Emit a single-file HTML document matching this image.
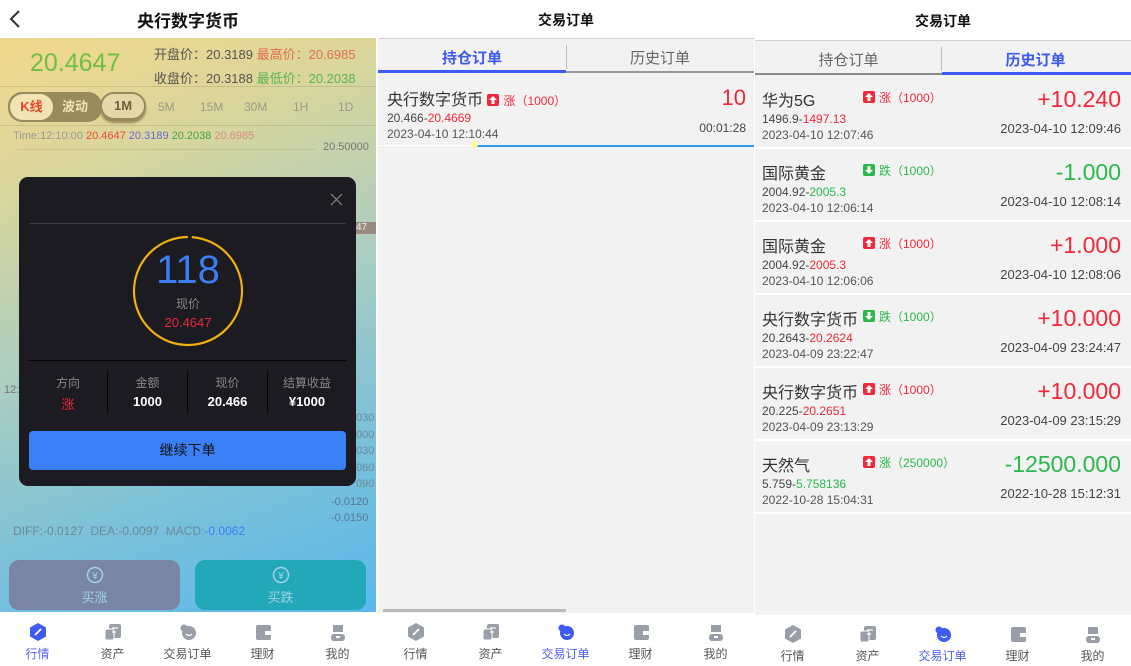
<!DOCTYPE html>
<html><head><meta charset="utf-8">
<style>
*{margin:0;padding:0;box-sizing:border-box}
body{width:1131px;height:666px;position:relative;overflow:hidden;background:#fff;font-family:"Liberation Sans","Noto Sans CJK SC",sans-serif}
.a{position:absolute;white-space:nowrap}
.panel{position:absolute;top:0;width:376px;height:666px;overflow:hidden}
.nav{position:absolute;left:0;width:376px;height:54px;background:#fff}
.ni{position:absolute;width:75px;text-align:center;font-size:12px;color:#555}
.ni svg{display:block;margin:0 auto 3px}
.tag{display:inline-block;width:12px;height:12px;border-radius:2px;vertical-align:-1px;margin-right:4px;position:relative}
</style></head><body>

<!-- LEFT PANEL -->
<div class="panel" style="left:0">
 <div class="a" style="left:0;top:0;width:376px;height:38px;background:#fff"></div>
 <svg class="a" style="left:8px;top:9px" width="14" height="20"><path d="M11 2 L3 10 L11 18" stroke="#333" stroke-width="2" fill="none"/></svg>
 <div class="a" style="left:0;top:7px;width:376px;text-align:center;font-size:17px;font-weight:bold;color:#111">央行数字货币</div>
 <div class="a" style="left:0;top:38px;width:376px;height:574px;background:linear-gradient(160deg,#f3d88c 0%,#d9d69c 22%,#a9cdc2 50%,#7fc2d6 72%,#5ab8ee 100%)"></div>
 <div class="a" style="left:30px;top:49px;font-size:25px;color:#6fbe45">20.4647</div>
 <div class="a" style="left:154px;top:44px;font-size:13px;color:#555">开盘价：20.3189 <span style="color:#e0704a">最高价：20.6985</span></div>
 <div class="a" style="left:154px;top:68px;font-size:13px;color:#555">收盘价：20.3188 <span style="color:#5ab550">最低价：20.2038</span></div>
 <div class="a" style="left:0;top:86px;width:376px;height:1px;background:rgba(0,0,0,.1)"></div>
 <div class="a" style="left:8px;top:92px;width:94px;height:30px;border-radius:14px;background:#978a5c"></div>
 <div class="a" style="left:10px;top:94px;width:43px;height:26px;border-radius:13px;background:#f1e3b3;color:#e8452a;font-size:13px;font-weight:bold;text-align:center;line-height:26px">K线</div>
 <div class="a" style="left:62px;top:94px;font-size:13px;font-weight:bold;color:#f1e3b3;line-height:26px">波动</div>
 <div class="a" style="left:100px;top:92px;width:46px;height:28px;border-radius:14px;background:#e4d8a8;border:2px solid #978a5c;color:#6b6040;font-size:13px;font-weight:bold;text-align:center;line-height:24px;box-shadow:0 3px 2px #978a5c">1M</div>
 <div class="a" style="left:158px;top:100px;font-size:12px;color:#9a9a88">5M</div>
 <div class="a" style="left:200px;top:100px;font-size:12px;color:#9a9a88">15M</div>
 <div class="a" style="left:244px;top:100px;font-size:12px;color:#9a9a88">30M</div>
 <div class="a" style="left:293px;top:100px;font-size:12px;color:#9a9a88">1H</div>
 <div class="a" style="left:338px;top:100px;font-size:12px;color:#9a9a88">1D</div>
 <div class="a" style="left:0;top:125px;width:376px;height:1px;background:rgba(0,0,0,.1)"></div>
 <div class="a" style="left:13px;top:130px;font-size:11px;color:#999">Time:12:10:00 <span style="color:#e84a3a">20.4647</span> <span style="color:#6a6ad0">20.3189</span> <span style="color:#4aa040">20.2038</span> <span style="color:#d88a80">20.6985</span></div>
 <div class="a" style="left:15px;top:149px;width:300px;height:1px;background:rgba(0,0,0,.08)"></div>
 <div class="a" style="left:323px;top:141px;font-size:11px;color:#777">20.50000</div>
 <div class="a" style="left:356px;top:222px;width:20px;height:12px;background:#9a8a80;color:#eee;font-size:10px">47</div>
 <div class="a" style="left:4px;top:384px;font-size:11px;color:#777">12:</div>
 <div class="a" style="left:356px;top:410px;font-size:11px;color:#6a8a9a;line-height:16.5px">030<br>000<br>030<br>060<br>090</div>
 <div class="a" style="left:331px;top:494px;font-size:11px;color:#557;line-height:16px;opacity:.7">-0.0120<br>-0.0150</div>
 <div class="a" style="left:13px;top:524px;font-size:12px;color:#6a8a98">DIFF:-0.0127 &nbsp;DEA:-0.0097 &nbsp;MACD:<span style="color:#3a7ef0">-0.0062</span></div>
 <div class="a" style="left:9px;top:560px;width:171px;height:50px;border-radius:10px;background:#7a85a6"></div>
 <div class="a" style="left:195px;top:560px;width:171px;height:50px;border-radius:10px;background:#22a8b8"></div>
 <svg class="a" style="left:86px;top:566px" width="18" height="18"><circle cx="9" cy="9" r="7.5" stroke="#9fd2e6" stroke-width="1.5" fill="none"/><text x="9" y="13" font-size="10" text-anchor="middle" fill="#9fd2e6">¥</text></svg>
 <svg class="a" style="left:272px;top:566px" width="18" height="18"><circle cx="9" cy="9" r="7.5" stroke="#9fd2e6" stroke-width="1.5" fill="none"/><text x="9" y="13" font-size="10" text-anchor="middle" fill="#9fd2e6">¥</text></svg>
 <div class="a" style="left:9px;top:587px;width:171px;text-align:center;font-size:13px;color:#9fd2e6">买涨</div>
 <div class="a" style="left:195px;top:587px;width:171px;text-align:center;font-size:13px;color:#9fd2e6">买跌</div>
 <!-- modal -->
 <div class="a" style="left:19px;top:177px;width:337px;height:309px;background:#1c1b21;border-radius:9px"></div>
 <svg class="a" style="left:330px;top:193px" width="13" height="13"><path d="M1 1L12 12M12 1L1 12" stroke="#888" stroke-width="1.2"/></svg>
 <div class="a" style="left:29px;top:223px;width:317px;height:1px;background:#3a3a40"></div>
 <svg class="a" style="left:132px;top:235px" width="112" height="112"><circle cx="56" cy="56" r="54" stroke="#f0b010" stroke-width="2.2" fill="none" stroke-dasharray="335 4" transform="rotate(-86 56 56)"/></svg>
 <div class="a" style="left:132px;top:248px;width:112px;text-align:center;font-size:40px;color:#3a7ef0">118</div>
 <div class="a" style="left:132px;top:295px;width:112px;text-align:center;font-size:12px;color:#888">现价</div>
 <div class="a" style="left:132px;top:315px;width:112px;text-align:center;font-size:13px;color:#e8283a">20.4647</div>
 <div class="a" style="left:29px;top:360px;width:317px;height:1px;background:#050505"></div>
 <div class="a" style="left:107px;top:372px;width:1px;height:40px;background:#050505"></div>
 <div class="a" style="left:187px;top:372px;width:1px;height:40px;background:#050505"></div>
 <div class="a" style="left:267px;top:372px;width:1px;height:40px;background:#050505"></div>
 <div class="a" style="left:29px;top:374px;width:78px;text-align:center;font-size:12px;color:#888">方向</div>
 <div class="a" style="left:108px;top:374px;width:79px;text-align:center;font-size:12px;color:#888">金额</div>
 <div class="a" style="left:188px;top:374px;width:79px;text-align:center;font-size:12px;color:#888">现价</div>
 <div class="a" style="left:268px;top:374px;width:78px;text-align:center;font-size:12px;color:#888">结算收益</div>
 <div class="a" style="left:29px;top:394px;width:78px;text-align:center;font-size:13px;color:#e8283a">涨</div>
 <div class="a" style="left:108px;top:394px;width:79px;text-align:center;font-size:13px;font-weight:bold;color:#fff">1000</div>
 <div class="a" style="left:188px;top:394px;width:79px;text-align:center;font-size:13px;font-weight:bold;color:#fff">20.466</div>
 <div class="a" style="left:268px;top:394px;width:78px;text-align:center;font-size:13px;font-weight:bold;color:#fff">¥1000</div>
 <div class="a" style="left:29px;top:431px;width:317px;height:39px;border-radius:4px;background:#3b7ff7;text-align:center;line-height:39px;font-size:14px;color:#111">继续下单</div>
 <!-- nav -->
 <div class="nav" style="top:612px">
  <div class="ni" style="left:0;top:10px;color:#5a5ef0"><svg width="20" height="20"><path d="M10 1L18 5.5V14.5L10 19L2 14.5V5.5Z" fill="#3e5af0"/><path d="M7 13L13 7" stroke="#fff" stroke-width="1.8"/></svg>行情</div>
  <div class="ni" style="left:75px;top:10px"><svg width="20" height="20"><rect x="6" y="2" width="12" height="14" rx="2" fill="#9a9ea8"/><rect x="2" y="7" width="9" height="11" rx="2" fill="#9a9ea8" stroke="#fff"/><path d="M9 6H15M9 10H13" stroke="#fff" stroke-width="1.3"/></svg>资产</div>
  <div class="ni" style="left:150px;top:10px"><svg width="20" height="20"><circle cx="11" cy="11" r="7" fill="#9a9ea8"/><circle cx="6" cy="6" r="3.5" fill="#9a9ea8"/><path d="M8 12Q11 15 14 12" stroke="#fff" stroke-width="1.2" fill="none"/></svg>交易订单</div>
  <div class="ni" style="left:225px;top:10px"><svg width="20" height="20"><rect x="3" y="3" width="15" height="15" rx="2" fill="#9a9ea8"/><rect x="12" y="9" width="6" height="4" fill="#fff"/></svg>理财</div>
  <div class="ni" style="left:300px;top:10px"><svg width="20" height="20"><path d="M5 3H15V10H5Z" fill="#9a9ea8"/><rect x="3" y="12" width="14" height="7" rx="3" fill="#9a9ea8"/><rect x="8" y="14" width="4" height="2" fill="#fff"/></svg>我的</div>
 </div>
</div>

<!-- MIDDLE PANEL -->
<div class="panel" style="left:378px;background:#f2f2f2">
 <div class="a" style="left:0;top:0;width:376px;height:38px;background:#fff"></div>
 <div class="a" style="left:0;top:10px;width:376px;text-align:center;font-size:14px;font-weight:bold;color:#111">交易订单</div>
 <div class="a" style="left:0;top:38px;width:376px;height:1px;background:#d0d0d0"></div>
 <div class="a" style="left:0;top:47px;width:188px;text-align:center;font-size:15px;font-weight:bold;color:#3d5af1">持仓订单</div>
 <div class="a" style="left:188px;top:47px;width:188px;text-align:center;font-size:15px;color:#666">历史订单</div>
 <div class="a" style="left:188px;top:45px;width:1px;height:24px;background:#bbb"></div>
 <div class="a" style="left:0;top:70px;width:188px;height:3px;background:#3d5af1"></div>
 <div class="a" style="left:188px;top:71px;width:188px;height:2px;background:#999"></div>
 <div class="a" style="left:9px;top:86px;font-size:16px;color:#333">央行数字货币 <span class="tag" style="background:#f0283a"><svg width="12" height="12" style="position:absolute;left:0;top:0"><path d="M6 2L10 6H7.5V10H4.5V6H2Z" fill="#fff"/></svg></span><span style="font-size:12px;color:#f0283a">涨（1000）</span></div>
 <div class="a" style="left:9px;top:111px;font-size:12px;color:#444">20.466-<span style="color:#f0283a">20.4669</span></div>
 <div class="a" style="left:9px;top:127px;font-size:12px;color:#555">2023-04-10 12:10:44</div>
 <div class="a" style="right:8px;top:85px;font-size:22px;color:#f0283a">10</div>
 <div class="a" style="right:8px;top:121px;font-size:12px;color:#444">00:01:28</div>
 <div class="a" style="left:0;top:145px;width:98px;height:1px;background:#fff"></div>
 <div class="a" style="left:98px;top:145px;width:278px;height:2px;background:#2a9ae8"></div>
 <div class="a" style="left:93px;top:141px;width:7px;height:7px;border-radius:50%;background:#fff6a0"></div>
 <div class="a" style="left:5px;top:609px;width:183px;height:3px;background:#bbb"></div>
 <div class="nav" style="top:613px">
  <div class="ni" style="left:0;top:9px"><svg width="20" height="20"><path d="M10 1L18 5.5V14.5L10 19L2 14.5V5.5Z" fill="#9a9ea8"/><path d="M7 13L13 7" stroke="#fff" stroke-width="1.8"/></svg>行情</div>
  <div class="ni" style="left:75px;top:9px"><svg width="20" height="20"><rect x="6" y="2" width="12" height="14" rx="2" fill="#9a9ea8"/><rect x="2" y="7" width="9" height="11" rx="2" fill="#9a9ea8" stroke="#fff"/><path d="M9 6H15M9 10H13" stroke="#fff" stroke-width="1.3"/></svg>资产</div>
  <div class="ni" style="left:150px;top:9px;color:#4a5ef0"><svg width="20" height="20"><circle cx="11" cy="11" r="7" fill="#3e5af0"/><circle cx="6" cy="6" r="3.5" fill="#3e5af0"/><path d="M8 12Q11 15 14 12" stroke="#fff" stroke-width="1.2" fill="none"/></svg>交易订单</div>
  <div class="ni" style="left:225px;top:9px"><svg width="20" height="20"><rect x="3" y="3" width="15" height="15" rx="2" fill="#9a9ea8"/><rect x="12" y="9" width="6" height="4" fill="#fff"/></svg>理财</div>
  <div class="ni" style="left:300px;top:9px"><svg width="20" height="20"><path d="M5 3H15V10H5Z" fill="#9a9ea8"/><rect x="3" y="12" width="14" height="7" rx="3" fill="#9a9ea8"/><rect x="8" y="14" width="4" height="2" fill="#fff"/></svg>我的</div>
 </div>
</div>

<!-- RIGHT PANEL -->
<div class="panel" style="left:755px;background:#f2f2f2">
 <div class="a" style="left:0;top:0;width:376px;height:40px;background:#fff"></div>
 <div class="a" style="left:0;top:11px;width:376px;text-align:center;font-size:14px;font-weight:bold;color:#111">交易订单</div>
 <div class="a" style="left:0;top:40px;width:376px;height:1px;background:#d0d0d0"></div>
 <div class="a" style="left:0;top:49px;width:187px;text-align:center;font-size:15px;color:#666">持仓订单</div>
 <div class="a" style="left:187px;top:49px;width:187px;text-align:center;font-size:15px;font-weight:bold;color:#3d5af1">历史订单</div>
 <div class="a" style="left:186px;top:47px;width:1px;height:24px;background:#bbb"></div>
 <div class="a" style="left:0;top:73px;width:187px;height:2px;background:#888"></div>
 <div class="a" style="left:187px;top:72px;width:189px;height:3px;background:#3d5af1"></div>

 <div class="a" style="left:0;top:147px;width:376px;height:2px;background:#fff"></div>
 <div class="a" style="left:0;top:220px;width:376px;height:2px;background:#fff"></div>
 <div class="a" style="left:0;top:293px;width:376px;height:2px;background:#fff"></div>
 <div class="a" style="left:0;top:366px;width:376px;height:2px;background:#fff"></div>
 <div class="a" style="left:0;top:439px;width:376px;height:2px;background:#fff"></div>
 <div class="a" style="left:0;top:512px;width:376px;height:2px;background:#fff"></div>

 <div class="a" style="left:7px;top:87px;font-size:16px;color:#333">华为5G</div>
 <div class="a" style="left:108px;top:89px;font-size:12px;color:#f0283a"><span class="tag" style="background:#f0283a"><svg width="12" height="12" style="position:absolute;left:0;top:0"><path d="M6 2L10 6H7.5V10H4.5V6H2Z" fill="#fff"/></svg></span>涨（1000）</div>
 <div class="a" style="left:7px;top:112px;font-size:12px;color:#444">1496.9-<span style="color:#f0283a">1497.13</span></div>
 <div class="a" style="left:7px;top:128px;font-size:12px;color:#555">2023-04-10 12:07:46</div>
 <div class="a" style="right:10px;top:86px;font-size:23px;color:#f0283a">+10.240</div>
 <div class="a" style="right:10px;top:121px;font-size:13px;color:#444">2023-04-10 12:09:46</div>

 <div class="a" style="left:7px;top:160px;font-size:16px;color:#333">国际黄金</div>
 <div class="a" style="left:108px;top:162px;font-size:12px;color:#2ab84a"><span class="tag" style="background:#2ab84a"><svg width="12" height="12" style="position:absolute;left:0;top:0"><path d="M6 10L10 6H7.5V2H4.5V6H2Z" fill="#fff"/></svg></span>跌（1000）</div>
 <div class="a" style="left:7px;top:185px;font-size:12px;color:#444">2004.92-<span style="color:#2ab84a">2005.3</span></div>
 <div class="a" style="left:7px;top:201px;font-size:12px;color:#555">2023-04-10 12:06:14</div>
 <div class="a" style="right:10px;top:159px;font-size:23px;color:#2ab84a">-1.000</div>
 <div class="a" style="right:10px;top:194px;font-size:13px;color:#444">2023-04-10 12:08:14</div>

 <div class="a" style="left:7px;top:233px;font-size:16px;color:#333">国际黄金</div>
 <div class="a" style="left:108px;top:235px;font-size:12px;color:#f0283a"><span class="tag" style="background:#f0283a"><svg width="12" height="12" style="position:absolute;left:0;top:0"><path d="M6 2L10 6H7.5V10H4.5V6H2Z" fill="#fff"/></svg></span>涨（1000）</div>
 <div class="a" style="left:7px;top:258px;font-size:12px;color:#444">2004.92-<span style="color:#f0283a">2005.3</span></div>
 <div class="a" style="left:7px;top:274px;font-size:12px;color:#555">2023-04-10 12:06:06</div>
 <div class="a" style="right:10px;top:232px;font-size:23px;color:#f0283a">+1.000</div>
 <div class="a" style="right:10px;top:267px;font-size:13px;color:#444">2023-04-10 12:08:06</div>

 <div class="a" style="left:7px;top:306px;font-size:16px;color:#333">央行数字货币</div>
 <div class="a" style="left:108px;top:308px;font-size:12px;color:#2ab84a"><span class="tag" style="background:#2ab84a"><svg width="12" height="12" style="position:absolute;left:0;top:0"><path d="M6 10L10 6H7.5V2H4.5V6H2Z" fill="#fff"/></svg></span>跌（1000）</div>
 <div class="a" style="left:7px;top:331px;font-size:12px;color:#444">20.2643-<span style="color:#f0283a">20.2624</span></div>
 <div class="a" style="left:7px;top:347px;font-size:12px;color:#555">2023-04-09 23:22:47</div>
 <div class="a" style="right:10px;top:305px;font-size:23px;color:#f0283a">+10.000</div>
 <div class="a" style="right:10px;top:340px;font-size:13px;color:#444">2023-04-09 23:24:47</div>

 <div class="a" style="left:7px;top:379px;font-size:16px;color:#333">央行数字货币</div>
 <div class="a" style="left:108px;top:381px;font-size:12px;color:#f0283a"><span class="tag" style="background:#f0283a"><svg width="12" height="12" style="position:absolute;left:0;top:0"><path d="M6 2L10 6H7.5V10H4.5V6H2Z" fill="#fff"/></svg></span>涨（1000）</div>
 <div class="a" style="left:7px;top:404px;font-size:12px;color:#444">20.225-<span style="color:#f0283a">20.2651</span></div>
 <div class="a" style="left:7px;top:420px;font-size:12px;color:#555">2023-04-09 23:13:29</div>
 <div class="a" style="right:10px;top:378px;font-size:23px;color:#f0283a">+10.000</div>
 <div class="a" style="right:10px;top:413px;font-size:13px;color:#444">2023-04-09 23:15:29</div>

 <div class="a" style="left:7px;top:452px;font-size:16px;color:#333">天然气</div>
 <div class="a" style="left:108px;top:454px;font-size:12px;color:#2ab84a"><span class="tag" style="background:#f0283a"><svg width="12" height="12" style="position:absolute;left:0;top:0"><path d="M6 2L10 6H7.5V10H4.5V6H2Z" fill="#fff"/></svg></span>涨（250000）</div>
 <div class="a" style="left:7px;top:477px;font-size:12px;color:#444">5.759-<span style="color:#2ab84a">5.758136</span></div>
 <div class="a" style="left:7px;top:493px;font-size:12px;color:#555">2022-10-28 15:04:31</div>
 <div class="a" style="right:10px;top:451px;font-size:23px;color:#2ab84a">-12500.000</div>
 <div class="a" style="right:10px;top:486px;font-size:13px;color:#444">2022-10-28 15:12:31</div>

 <div class="nav" style="top:615px">
  <div class="ni" style="left:0;top:9px"><svg width="20" height="20"><path d="M10 1L18 5.5V14.5L10 19L2 14.5V5.5Z" fill="#9a9ea8"/><path d="M7 13L13 7" stroke="#fff" stroke-width="1.8"/></svg>行情</div>
  <div class="ni" style="left:75px;top:9px"><svg width="20" height="20"><rect x="6" y="2" width="12" height="14" rx="2" fill="#9a9ea8"/><rect x="2" y="7" width="9" height="11" rx="2" fill="#9a9ea8" stroke="#fff"/><path d="M9 6H15M9 10H13" stroke="#fff" stroke-width="1.3"/></svg>资产</div>
  <div class="ni" style="left:150px;top:9px;color:#4a5ef0"><svg width="20" height="20"><circle cx="11" cy="11" r="7" fill="#3e5af0"/><circle cx="6" cy="6" r="3.5" fill="#3e5af0"/><path d="M8 12Q11 15 14 12" stroke="#fff" stroke-width="1.2" fill="none"/></svg>交易订单</div>
  <div class="ni" style="left:225px;top:9px"><svg width="20" height="20"><rect x="3" y="3" width="15" height="15" rx="2" fill="#9a9ea8"/><rect x="12" y="9" width="6" height="4" fill="#fff"/></svg>理财</div>
  <div class="ni" style="left:300px;top:9px"><svg width="20" height="20"><path d="M5 3H15V10H5Z" fill="#9a9ea8"/><rect x="3" y="12" width="14" height="7" rx="3" fill="#9a9ea8"/><rect x="8" y="14" width="4" height="2" fill="#fff"/></svg>我的</div>
 </div>
</div>
</body></html>
